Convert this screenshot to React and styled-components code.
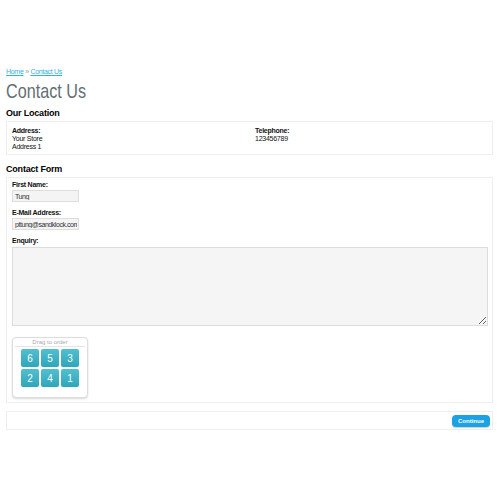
import React from "react";
import styled, { createGlobalStyle } from "styled-components";

const GlobalStyle = createGlobalStyle`
  body {
    margin: 0;
    background: #fff;
    font-family: "Liberation Sans", Arial, sans-serif;
    color: #333;
  }
`;

const Page = styled.div`
  width: 500px;
  height: 500px;
  box-sizing: border-box;
  padding: 68px 7px 0 6px;
`;

const Breadcrumb = styled.div`
  font-size: 7px;
  line-height: 8px;
  letter-spacing: -0.3px;
  color: #999;
  a {
    color: #38b0e3;
    text-decoration: underline;
  }
`;

const Title = styled.h1`
  display: inline-block;
  margin: 3px 0 0;
  font-size: 21px;
  line-height: 24px;
  font-weight: normal;
  color: #636e73;
  transform: scaleX(0.77);
  transform-origin: left center;
`;

const SectionTitle = styled.h2`
  margin: ${(p) => p.$top || 8}px 0 ${(p) => p.$bottom || 3}px;
  font-size: 9px;
  line-height: 11px;
  font-weight: bold;
  letter-spacing: -0.2px;
  color: #000;
`;

const Panel = styled.div`
  border: 1px solid #eee;
  padding: ${(p) => p.$pad || "5px"};
  box-sizing: border-box;
`;

const LocationGrid = styled.div`
  display: grid;
  grid-template-columns: 243px 1fr;
  font-size: 7px;
  line-height: 7.5px;
  letter-spacing: -0.25px;
  color: #111;
  min-height: 20px;
`;

const Label = styled.b`
  display: block;
  font-size: 7px;
  line-height: 8px;
  letter-spacing: -0.25px;
  color: #111;
`;

const Field = styled.div`
  margin-bottom: ${(p) => p.$gap ?? 7}px;
`;

const Input = styled.input`
  display: block;
  width: 67px;
  height: 12px;
  box-sizing: border-box;
  margin-top: 1px;
  padding: 0 1px 0 2px;
  border: 1px solid #ddd;
  background: #f4f4f4;
  font-family: "Liberation Sans", Arial, sans-serif;
  font-size: 7px;
  letter-spacing: -0.45px;
  color: #333;
  outline: none;
`;

const TextArea = styled.textarea`
  display: block;
  width: 476px;
  height: 79px;
  box-sizing: border-box;
  margin-top: 2px;
  border: 1px solid #ddd;
  background: #f5f5f5;
  outline: none;
`;

const Captcha = styled.div`
  margin-top: 11px;
  width: 76px;
  height: 61px;
  box-sizing: border-box;
  border: 1px solid #ddd;
  border-radius: 4px;
  box-shadow: 0 1px 2px rgba(0, 0, 0, 0.15);
  background: #fff;
`;

const CaptchaHead = styled.div`
  margin: 0 2px;
  border-bottom: 1px solid #e4e4e4;
  text-align: center;
  font-size: 6px;
  line-height: 8px;
  color: #aaa;
`;

const Tiles = styled.div`
  display: grid;
  grid-template-columns: repeat(3, 18px);
  grid-auto-rows: 18px;
  gap: 2px;
  justify-content: center;
  margin-top: 2px;
`;

const Tile = styled.div`
  display: flex;
  align-items: center;
  justify-content: center;
  border-radius: 2px;
  background: linear-gradient(#52bfd0, #2fa6ba);
  color: #fff;
  font-size: 10px;
`;

const Buttons = styled(Panel)`
  margin-top: 8px;
  display: flex;
  justify-content: flex-end;
  padding: 3px 2px 2px;
`;

const Button = styled.button`
  height: 12px;
  padding: 0 6px;
  border: none;
  border-radius: 4px;
  background: #1ba2e4;
  color: #fff;
  font-family: "Liberation Sans", Arial, sans-serif;
  font-size: 6px;
  font-weight: bold;
  box-shadow: 0 1px 1px rgba(0, 0, 0, 0.2);
`;

export default function App() {
  return (
    <Page>
      <GlobalStyle />
      <Breadcrumb>
        <a>Home</a> » <a>Contact Us</a>
      </Breadcrumb>
      <Title>Contact Us</Title>

      <SectionTitle $top={5} $bottom={2}>Our Location</SectionTitle>
      <Panel $pad="5px 5px 4px">
        <LocationGrid>
          <div>
            <Label>Address:</Label>
            Your Store
            <br />
            Address 1
          </div>
          <div>
            <Label>Telephone:</Label>
            123456789
          </div>
        </LocationGrid>
      </Panel>

      <SectionTitle $top={9} $bottom={2}>Contact Form</SectionTitle>
      <Panel $pad="3px 5px 4px">
        <Field>
          <Label>First Name:</Label>
          <Input defaultValue="Tung" />
        </Field>
        <Field>
          <Label>E-Mail Address:</Label>
          <Input defaultValue="pttung@sandklock.com" />
        </Field>
        <Field $gap={0}>
          <Label>Enquiry:</Label>
          <TextArea />
        </Field>
        <Captcha>
          <CaptchaHead>Drag to order</CaptchaHead>
          <Tiles>
            {[6, 5, 3, 2, 4, 1].map((n) => (
              <Tile key={n}>{n}</Tile>
            ))}
          </Tiles>
        </Captcha>
      </Panel>

      <Buttons>
        <Button>Continue</Button>
      </Buttons>
    </Page>
  );
}
